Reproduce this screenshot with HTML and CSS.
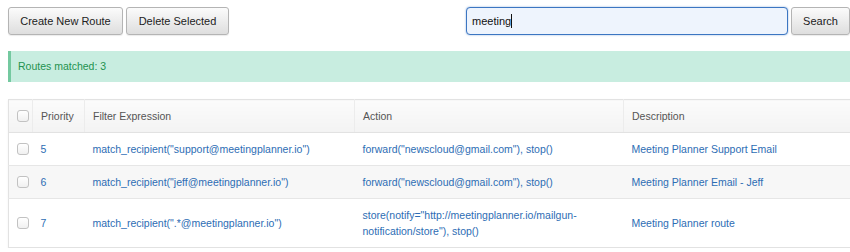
FILE: index.html
```html
<!DOCTYPE html>
<html>
<head>
<meta charset="utf-8">
<link rel="stylesheet" href="styles.css">
</head>
<body>
<div class="page">
  <div class="toolbar">
    <div class="actions">
      <button class="btn">Create New Route</button>
      <button class="btn">Delete Selected</button>
    </div>
    <div class="search">
      <div class="search-input">meeting<span class="caret"></span></div>
      <button class="btn btn-search">Search</button>
    </div>
  </div>
  <div class="alert">Routes matched: 3</div>
  <table class="routes">
    <colgroup>
      <col class="c-cb"><col class="c-pri"><col class="c-filter"><col class="c-action"><col class="c-desc">
    </colgroup>
    <thead>
      <tr>
        <th><span class="cb"></span></th>
        <th>Priority</th>
        <th>Filter Expression</th>
        <th>Action</th>
        <th>Description</th>
      </tr>
    </thead>
    <tbody>
      <tr>
        <td><span class="cb"></span></td>
        <td><a>5</a></td>
        <td><a>match_recipient("support@meetingplanner.io")</a></td>
        <td><a>forward("newscloud@gmail.com"), stop()</a></td>
        <td><a>Meeting Planner Support Email</a></td>
      </tr>
      <tr class="alt">
        <td><span class="cb"></span></td>
        <td><a>6</a></td>
        <td><a>match_recipient("jeff@meetingplanner.io")</a></td>
        <td><a>forward("newscloud@gmail.com"), stop()</a></td>
        <td><a>Meeting Planner Email - Jeff</a></td>
      </tr>
      <tr>
        <td><span class="cb"></span></td>
        <td><a>7</a></td>
        <td><a>match_recipient(".*@meetingplanner.io")</a></td>
        <td><a>store(notify="http://meetingplanner.io/mailgun-<br>notification/store"), stop()</a></td>
        <td><a>Meeting Planner route</a></td>
      </tr>
    </tbody>
  </table>
</div>
</body>
</html>
```
FILE: styles.css
```css
html, body {
  margin: 0;
  padding: 0;
  background: #ffffff;
}
body {
  font-family: "Liberation Sans", Arial, Helvetica, sans-serif;
  font-size: 10.5px;
  color: #333;
}
.page {
  padding: 7px 0 0 8px;
  width: 842px;
}
.toolbar {
  display: flex;
  justify-content: space-between;
  align-items: flex-start;
  height: 28px;
}
.actions {
  display: flex;
  gap: 3px;
}
.btn {
  font-family: "Liberation Sans", Arial, Helvetica, sans-serif;
  font-size: 11px;
  color: #222;
  height: 28px;
  padding: 0;
  white-space: nowrap;
  border: 1px solid #b4b4b4;
  border-radius: 3px;
  background: linear-gradient(#fbfbfb, #dedede);
  box-shadow: 0 1px 1px rgba(0,0,0,0.08);
  margin: 0;
}
.actions .btn:first-child { width: 115px; }
.actions .btn:last-child { width: 103px; }
.search {
  display: flex;
  gap: 3px;
}
.search-input {
  box-sizing: border-box;
  width: 322px;
  height: 28px;
  border: 1px solid #3c76c2;
  border-radius: 4px;
  background: #eef4fd;
  box-shadow: 0 0 2px rgba(60,118,194,0.6);
  padding: 0 5px;
  font-size: 11px;
  line-height: 26px;
  color: #111;
}
.caret {
  display: inline-block;
  width: 1px;
  height: 14px;
  background: #111;
  vertical-align: -3px;
}
.btn-search {
  width: 59px;
}
.alert {
  margin-top: 16px;
  height: 31px;
  box-sizing: border-box;
  background: #c8ede0;
  border-left: 3px solid #74c9a0;
  color: #23924f;
  padding: 0 0 0 7px;
  line-height: 31px;
}
.routes {
  margin-top: 17px;
  width: 842px;
  border-collapse: collapse;
  table-layout: fixed;
  border: 1px solid #e2e2e2;
  box-shadow: 0 1px 2px rgba(0,0,0,0.06);
}
.c-cb { width: 24px; }
.c-pri { width: 52px; }
.c-filter { width: 270px; }
.c-action { width: 269px; }
.c-desc { width: 227px; }
.routes th {
  text-align: left;
  font-weight: normal;
  color: #555;
  background: linear-gradient(#fbfbfb, #f3f3f3);
  padding: 8px 8px;
  line-height: 16px;
  border-left: 1px solid #ececec;
  border-bottom: 1px solid #e2e2e2;
  height: 16px;
}
.routes th:first-child { border-left: none; }
.routes td {
  padding: 8px 8px;
  line-height: 16px;
  border-top: 1px solid #e6e6e6;
  vertical-align: middle;
}
.routes th:first-child,
.routes td:first-child {
  padding: 0 0 0 8px;
}
.routes tr.alt td {
  background: #f7f7f7;
}
.routes a {
  color: #2d6db4;
}
.cb {
  display: block;
  width: 10px;
  height: 10px;
  border: 1px solid #c2c2c2;
  border-radius: 3px;
  background: linear-gradient(#ffffff, #f0f0f0);
}
```
